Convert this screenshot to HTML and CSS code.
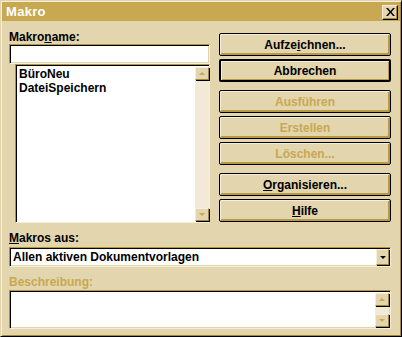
FILE: index.html
```html
<!DOCTYPE html>
<html lang="de">
<head>
  <meta charset="UTF-8">
  <title>Makro</title>
  <link rel="stylesheet" href="styles.css">
</head>
<body>
  <div class="window">
    <div class="titlebar">
      <span class="title">Makro</span>
      <div class="close-btn">
        <svg width="9" height="8" viewBox="0 0 9 8"><path d="M0 0h2l2.5 3 2.5-3h2l-3.5 4 3.5 4h-2l-2.5-3-2.5 3h-2l3.5-4z" fill="#000"/></svg>
      </div>
    </div>

    <div class="dialog">
      <div class="top">
        <!-- linke Seite: Name + Liste -->
        <div class="left-col">
          <label class="label">Makro<u>n</u>ame:</label>
          <div class="field name-field"></div>
          <div class="listbox">
            <div class="list-items">
              <div class="item">BüroNeu</div>
              <div class="item">DateiSpeichern</div>
            </div>
            <div class="scrollbar">
              <div class="arrow up"><span class="tri tri-up"></span></div>
              <div class="track"></div>
              <div class="arrow down"><span class="tri tri-down"></span></div>
            </div>
          </div>
        </div>

        <!-- rechte Seite: Schaltflächen -->
        <div class="right-col">
          <div class="btn-group">
            <button class="btn">Aufze<u>i</u>chnen...</button>
            <button class="btn default">Abbrechen</button>
          </div>
          <div class="btn-group">
            <button class="btn disabled">Ausführen</button>
            <button class="btn disabled">Erstellen</button>
            <button class="btn disabled">Löschen...</button>
          </div>
          <div class="btn-group">
            <button class="btn"><u>O</u>rganisieren...</button>
            <button class="btn"><u>H</u>ilfe</button>
          </div>
        </div>
      </div>

      <label class="label makros-label"><u>M</u>akros aus:</label>
      <div class="field select">
        <span class="select-text">Allen aktiven Dokumentvorlagen</span>
        <div class="drop-btn"><span class="tri tri-black"></span></div>
      </div>

      <label class="label disabled-text desc-label">Beschreibung:</label>
      <div class="field desc">
        <div class="desc-text"></div>
        <div class="scrollbar">
          <div class="arrow up"><span class="tri tri-up"></span></div>
          <div class="track"></div>
          <div class="arrow down"><span class="tri tri-down"></span></div>
        </div>
      </div>
    </div>
  </div>
</body>
</html>
```

FILE: styles.css
```css
body {
  margin: 0;
  padding: 0;
  background: #e3d5ae;
  font-family: "Liberation Sans", Arial, sans-serif;
  font-size: 12px;
  font-weight: bold;
  color: #000;
}

.window {
  width: 402px;
  height: 337px;
  box-sizing: border-box;
  padding: 1px;
  background: #e3d5ae;
  border: 1px solid;
  border-color: #e3d5ae #000 #000 #e3d5ae;
  box-shadow: inset 1px 1px #f6eedb, inset -1px -1px #a08838;
}

.titlebar {
  height: 19px;
  background: #c8a850;
  display: flex;
  align-items: center;
  justify-content: space-between;
  padding: 0 2px 0 4px;
}

.title {
  color: #fff;
  font-size: 13px;
  letter-spacing: 0.3px;
}

.close-btn {
  width: 14px;
  height: 13px;
  margin-top: 1px;
  background: #e3d5ae;
  border: 1px solid;
  border-color: #f6eedb #000 #000 #f6eedb;
  box-shadow: inset -1px -1px #a08838;
  display: flex;
  align-items: center;
  justify-content: center;
}

.dialog {
  padding: 9px 9px 0 7px;
}

.top {
  display: flex;
  gap: 9px;
}

.left-col {
  width: 201px;
  display: flex;
  flex-direction: column;
}

.label {
  display: block;
  height: 14px;
  line-height: 14px;
}

.label u,
.btn u {
  text-decoration-thickness: 1px;
  text-underline-offset: 1px;
}

.field {
  box-sizing: border-box;
  background: #fff;
  border: 1px solid;
  border-color: #b09440 #f6eedb #f6eedb #b09440;
  box-shadow: inset 1px 1px #000, inset -1px -1px #e3d5ae;
}

.name-field {
  height: 20px;
}

.listbox {
  box-sizing: border-box;
  margin-left: 6px;
  width: 195px;
  height: 159px;
  background: #fff;
  border: 1px solid;
  border-color: #b09440 #f6eedb #f6eedb #b09440;
  box-shadow: inset 1px 1px #000;
  display: flex;
  padding: 2px 0 1px 2px;
}

.list-items {
  flex: 1;
  padding: 0 0 0 1px;
}

.item {
  height: 14px;
  line-height: 14px;
}

.scrollbar {
  width: 14px;
  display: flex;
  flex-direction: column;
  background: #f2ead6;
}

.track {
  flex: 1;
}

.arrow {
  height: 13px;
  box-sizing: border-box;
  background: #e3d5ae;
  border: 1px solid;
  border-color: #f6eedb #a08838 #a08838 #f6eedb;
  box-shadow: 1px 1px #000;
  display: flex;
  align-items: center;
  justify-content: center;
}

.tri {
  width: 0;
  height: 0;
  border-left: 3px solid transparent;
  border-right: 3px solid transparent;
}

.tri-up {
  border-bottom: 3px solid #c8a850;
}

.tri-down {
  border-top: 3px solid #c8a850;
}

.tri-black {
  border-top: 3px solid #000;
  margin-top: 1px;
}

.right-col {
  width: 172px;
  padding-top: 3px;
  display: flex;
  flex-direction: column;
  gap: 8px;
}

.btn-group {
  display: flex;
  flex-direction: column;
  gap: 3px;
}

.btn {
  height: 23px;
  width: 100%;
  box-sizing: border-box;
  margin: 0;
  padding: 0;
  font: inherit;
  color: #000;
  background: #e3d5ae;
  border: 1px solid #000;
  border-radius: 2px;
  box-shadow: inset 1px 1px #f6eedb, inset -2px -2px #b89a44;
  cursor: default;
}

.btn.default {
  border-width: 2px;
  box-shadow: inset 1px 1px #f6eedb, inset -1px -1px #b89a44;
}

.btn.disabled,
.disabled-text {
  color: #c8a850;
}

.makros-label {
  margin-top: 8px;
  height: 16px;
}

.select {
  height: 20px;
  display: flex;
  align-items: center;
  padding: 0 1px 0 3px;
}

.select-text {
  flex: 1;
}

.drop-btn {
  width: 13px;
  height: 16px;
  box-sizing: border-box;
  background: #e3d5ae;
  border: 1px solid;
  border-color: #f6eedb #a08838 #a08838 #f6eedb;
  box-shadow: 1px 1px #000;
  display: flex;
  align-items: center;
  justify-content: center;
}

.desc-label {
  margin-top: 8px;
  height: 15px;
}

.desc {
  height: 39px;
  display: flex;
  padding: 2px 1px 1px 2px;
}

.desc-text {
  flex: 1;
}
```
